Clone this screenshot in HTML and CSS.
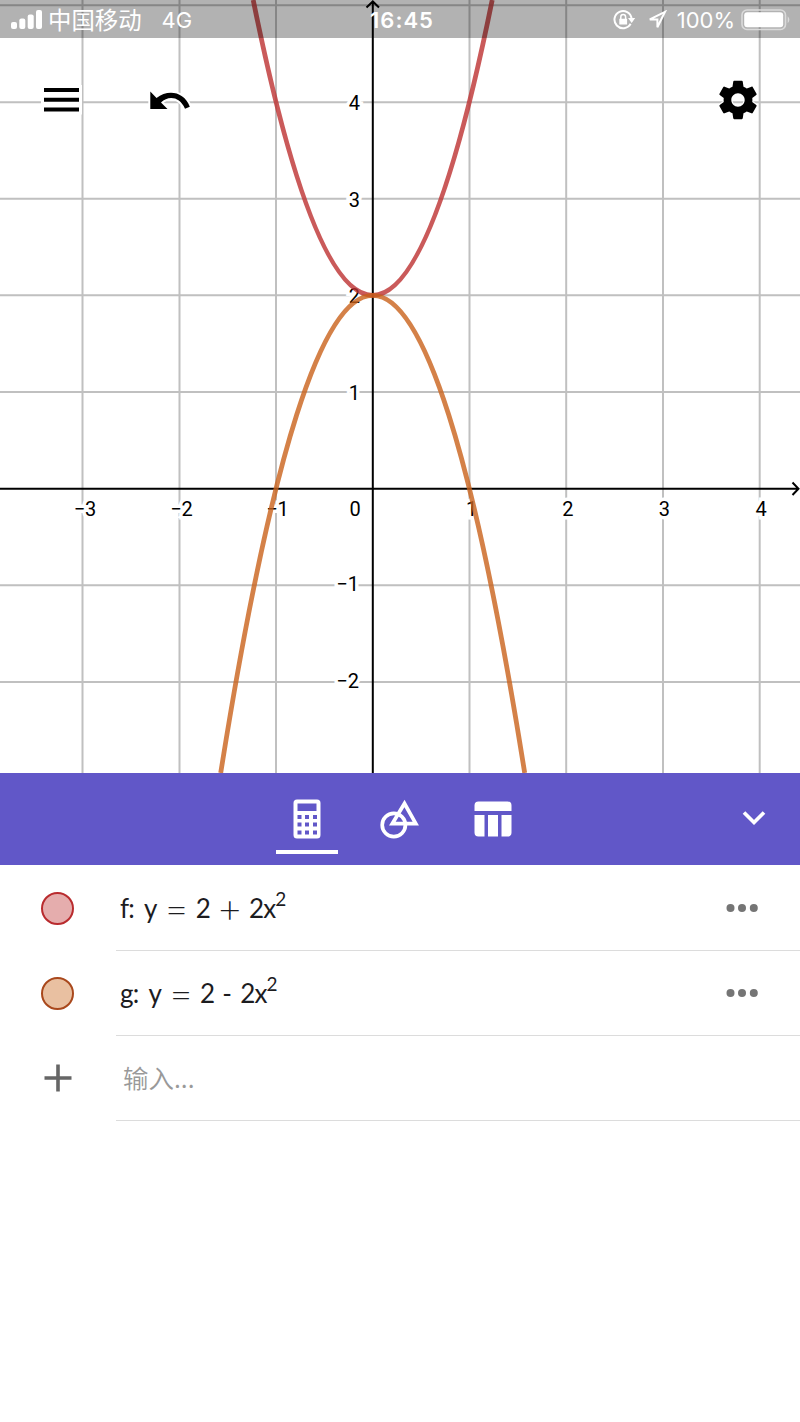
FILE: index.html
```html
<!DOCTYPE html>
<html lang="zh-CN">
<head>
  <meta charset="utf-8"/>
  <meta name="viewport" content="width=device-width, initial-scale=1.0"/>
  <title>Graphing Calculator</title>
  <link rel="stylesheet" href="styles.css">
</head>
<body>
  <div class="app">
    <main class="graph">
      <svg class="plot" width="800" height="773" viewBox="0 0 800 773">
        <path class="grid" d="M82.5 0V773M179.5 0V773M276 0V773M469.5 0V773M566.2 0V773M663 0V773M759.7 0V773M0 5.3H800M0 102.2H800M0 198.7H800M0 295.3H800M0 392H800M0 585.3H800M0 682H800"/>
        <g class="labels">
          <text x="85" y="516">−3</text>
          <text x="181.5" y="516">−2</text>
          <text x="277.5" y="516">−1</text>
          <text x="355" y="516">0</text>
          <text x="471.5" y="516">1</text>
          <text x="567.8" y="516">2</text>
          <text x="664.3" y="516">3</text>
          <text x="761.2" y="516">4</text>
        </g>
        <g class="labels labels-y">
          <text x="360" y="109.5">4</text>
          <text x="360" y="206.5">3</text>
          <text x="360" y="303">2</text>
          <text x="360" y="399.5">1</text>
          <text x="359" y="591">−1</text>
          <text x="359" y="687.7">−2</text>
        </g>
        <path class="axis" d="M0 488.7H798M372.8 2V773M792.5 482.5L798.5 488.7L792.5 495M366.5 7.5L372.8 1.5L379 7.5"/>
        <path class="curve curve-f" d="M253.2 0Q372.7 590.6 492.2 0"/>
        <path class="curve curve-g" d="M220.7 773Q372.7 -182.4 524.7 773"/>
      </svg>

      <header class="status">
        <div class="status-left">
          <svg width="32" height="20" viewBox="0 0 32 20" fill="#fff">
            <rect x="0" y="12" width="6" height="7" rx="2"/>
            <rect x="8.3" y="8.5" width="6" height="10.5" rx="2"/>
            <rect x="16.7" y="4.5" width="6" height="14.5" rx="2"/>
            <rect x="25" y="0" width="6" height="19" rx="2"/>
          </svg>
          <span class="carrier">中国移动</span>
          <span class="network">4G</span>
        </div>
        <time class="clock">16:45</time>
        <div class="status-right">
          <svg class="lock" width="23" height="22" viewBox="0 0 23 22">
            <path class="line" d="M17.6 14.8A8.6 8.6 0 1 1 18.6 9.5"/>
            <path fill="#fff" d="M15 9h7.2l-3.5 5zM6.3 9.8h7.8v5.7H6.3z"/>
            <path class="line thin" d="M7.8 10V8a2.4 2.4 0 0 1 4.8 0v2"/>
          </svg>
          <svg class="location" width="19" height="20" viewBox="0 0 19 20">
            <path class="line" d="M17 1.8L1.8 9.4H9.4V17.2Z"/>
          </svg>
          <span class="percent">100%</span>
          <svg class="battery" width="50" height="22" viewBox="0 0 50 22">
            <rect x="1" y="1" width="43.5" height="19.5" rx="5" fill="none" stroke="#dadada" stroke-width="1.6"/>
            <rect x="3.2" y="3.3" width="39" height="15" rx="3" fill="#fff"/>
            <path d="M46.7 7.2q3.4 3.4 0 7z" fill="#dadada"/>
          </svg>
        </div>
      </header>

      <nav class="tools">
        <svg class="menu" width="36" height="24" viewBox="0 0 36 24">
          <path d="M0 0h35v4H0zM0 9.7h35v4H0zM0 19.4h35v4H0z"/>
        </svg>
        <svg class="undo" width="40" height="20" viewBox="0 0 40 20">
          <path d="M.3 .5V18H17.5L11 11.500C18 4.500 29.500 5 35 17.700L39.800 15.700C34 .5 18-1.800 6.500 7Z"/>
        </svg>
        <svg class="gear" width="46" height="46" viewBox="0 0 24 24">
          <path d="M19.43 12.98c.04-.32.07-.64.07-.98s-.03-.66-.07-.98l2.110-1.650c.19-.15.24-.42.12-.64l-2-3.460c-.12-.22-.39-.3-.61-.22l-2.490 1c-.52-.4-1.080-.73-1.690-.98l-.38-2.650C14.460 2.180 14.250 2 14 2h-4c-.25 0-.46.18-.49.42l-.38 2.650c-.61.25-1.170.59-1.690.98l-2.490-1c-.23-.09-.49 0-.61.22l-2 3.460c-.13.22-.07.49.12.64l2.110 1.650c-.04.32-.07.65-.07.98s.03.66.07.98l-2.110 1.650c-.19.15-.24.42-.12.64l2 3.460c.12.22.39.3.61.22l2.490-1c.52.4 1.080.73 1.690.98l.38 2.650c.03.24.24.42.49.42h4c.25 0 .46-.18.49-.42l.38-2.650c.61-.25 1.170-.59 1.690-.98l2.490 1c.23.09.49 0 .61-.22l2-3.460c.12-.22.07-.49-.12-.64l-2.110-1.650zM12 15.500c-1.930 0-3.500-1.570-3.500-3.500s1.570-3.500 3.500-3.500 3.500 1.570 3.500 3.500-1.570 3.500-3.500 3.500z"/>
        </svg>
      </nav>
    </main>

    <nav class="tabs">
      <div class="tab active">
        <svg width="28" height="40" viewBox="0 0 28 40">
          <path fill="#fff" fill-rule="evenodd" d="M4 .5H24Q27.500 .5 27.500 4V36Q27.500 39.500 24 39.500H4Q.5 39.500 .5 36V4Q.5 .5 4 .5ZM4.500 4.500V12H23.500V4.500ZM4.500 16V20H8.500V16ZM12 16V20H16V16ZM20 16V20H24V16ZM4.500 23.500V27.500H8.500V23.500ZM12 23.500V27.500H16V23.500ZM20 23.500V27.500H24V23.500ZM4.500 31.500V35.500H8.500V31.500ZM12 31.500V35.500H16V31.500ZM20 31.500V35.500H24V31.500Z"/>
        </svg>
      </div>
      <div class="tab">
        <svg width="40" height="40" viewBox="0 0 40 40" fill="none" stroke="#fff" stroke-width="3.700">
          <circle cx="13.800" cy="26" r="11.600"/>
          <path d="M24.500 4.500L12.300 24.700H35.800Z"/>
        </svg>
      </div>
      <div class="tab">
        <svg width="38" height="40" viewBox="0 0 38 40" fill="#fff">
          <path d="M4.500 2.500H33.500Q37.500 2.500 37.500 6.500V12H.5V6.500Q.5 2.500 4.500 2.500ZM.5 16H10.500V37.500H4.500Q.5 37.500 .5 33.500ZM14 16H24V37.500H14ZM27.500 16H37.500V33.500Q37.500 37.500 33.500 37.500H27.500Z"/>
        </svg>
      </div>
      <svg class="collapse" width="24" height="16" viewBox="0 0 24 16">
        <path d="M2 2.500L12 12.500L22 2.500"/>
      </svg>
    </nav>

    <section class="rows">
      <div class="row">
        <div class="marker"><span class="dot dot-f"></span></div>
        <div class="cell">
          <div class="formula">
            <span>f:</span><span>y</span><span class="op">=</span><span>2</span><span class="op">+</span><span>2x<sup>2</sup></span>
          </div>
          <svg class="more" width="32" height="10" viewBox="0 0 32 10"><circle cx="4.500" cy="5" r="4"/><circle cx="16" cy="5" r="4"/><circle cx="27.800" cy="5" r="4"/></svg>
        </div>
      </div>
      <div class="row">
        <div class="marker"><span class="dot dot-g"></span></div>
        <div class="cell">
          <div class="formula">
            <span>g:</span><span>y</span><span class="op">=</span><span>2</span><span class="minus">-</span><span>2x<sup>2</sup></span>
          </div>
          <svg class="more" width="32" height="10" viewBox="0 0 32 10"><circle cx="4.500" cy="5" r="4"/><circle cx="16" cy="5" r="4"/><circle cx="27.800" cy="5" r="4"/></svg>
        </div>
      </div>
      <div class="row">
        <div class="marker">
          <svg width="28" height="28" viewBox="0 0 28 28" stroke="#666" stroke-width="3.600"><path d="M14 .5V27.500M.5 14H27.500"/></svg>
        </div>
        <div class="cell"><span class="placeholder">输入...</span></div>
      </div>
    </section>
  </div>
</body>
</html>
```

FILE: styles.css
```css
* {
  box-sizing: border-box;
}
body {
  margin: 0;
  background: #fff;
  font-family: Roboto, "Noto Sans CJK SC", sans-serif;
}
svg {
  display: block;
  flex-shrink: 0;
}
.app {
  width: 800px;
  height: 1422px;
  overflow: hidden;
}

/* graph */
.graph {
  display: grid;
  grid-template-rows: 38px 1fr;
  height: 773px;
}
.plot {
  grid-area: 1 / 1 / 3 / 2;
}
.grid {
  stroke: #c0c0c0;
  stroke-width: 2;
}
.axis {
  fill: none;
  stroke: #000;
  stroke-width: 2;
}
.labels {
  font-size: 20px;
  text-anchor: middle;
  stroke: #fff;
  stroke-width: 7px;
  paint-order: stroke;
}
.labels-y {
  text-anchor: end;
}
.curve {
  fill: none;
  stroke-width: 4.8;
  stroke-opacity: 0.8;
}
.curve-f {
  stroke: #bd3131;
}
.curve-g {
  stroke: #c9611a;
}

/* status bar */
.status {
  grid-area: 1 / 1 / 2 / 2;
  z-index: 1;
  display: grid;
  grid-template-columns: 370px 1fr auto;
  align-items: center;
  padding-right: 9px;
  background: rgba(0, 0, 0, 0.3);
  color: #fff;
  font-family: Inter, "Noto Sans CJK SC", sans-serif;
  font-size: 22px;
  line-height: 39px;
}
.status-left,
.status-right {
  display: flex;
  align-items: center;
  height: 38px;
}
.status-left {
  padding-left: 11px;
}
.carrier {
  margin-left: 5px;
  font-size: 23.4px;
}
.network {
  margin: 1px 0 0 20px;
}
.clock {
  padding-top: 1px;
  font-weight: 600;
  letter-spacing: 1px;
}
.line {
  fill: none;
  stroke: #fff;
  stroke-width: 2;
}
.thin {
  stroke-width: 1.5;
}
.location {
  margin-left: 12px;
}
.percent {
  margin: 1px 0 0 10px;
}
.battery {
  margin-left: 6px;
}

/* toolbar on the graph */
.tools {
  grid-area: 2 / 1 / 3 / 2;
  z-index: 1;
  display: flex;
  align-items: flex-start;
  padding: 39px 39px 0 44px;
}
.menu,
.undo,
.gear {
  overflow: visible;
  stroke: #fff;
  paint-order: stroke;
}
.menu {
  margin-top: 11px;
  stroke-width: 6px;
}
.undo {
  margin: 14px 0 0 70px;
  stroke-width: 4px;
}
.gear {
  margin-left: auto;
  stroke-width: 1.2px;
}

/* tabs */
.tabs {
  display: grid;
  grid-template-columns: 62px 62px 62px 1fr;
  column-gap: 31px;
  height: 92px;
  padding: 26px 34px 0 276px;
  background: #6157c8;
}
.tab {
  display: flex;
  justify-content: center;
  height: 55px;
}
.active {
  border-bottom: 4px solid #fff;
}
.collapse {
  justify-self: end;
  margin-top: 11px;
  fill: none;
  stroke: #fff;
  stroke-width: 3.7;
}

/* algebra list */
.rows {
  padding-top: 1px;
}
.row {
  display: grid;
  grid-template-columns: 116px 1fr;
  height: 85px;
}
.marker {
  display: flex;
  align-items: center;
  justify-content: center;
  padding: 0 1px 1px 0;
}
.dot {
  width: 33px;
  height: 33px;
  border: 2px solid;
  border-radius: 50%;
}
.dot-f {
  border-color: #b92b2e;
  background: #e5adad;
}
.dot-g {
  border-color: #a9481c;
  background: #e9c0a1;
}
.cell {
  display: flex;
  align-items: center;
  justify-content: space-between;
  padding: 0 42px 0 4px;
  border-bottom: 1px solid #dcdcdc;
}
.formula {
  display: flex;
  gap: 10px;
  color: #1c1c1f;
  font-family: Lato, sans-serif;
  font-size: 26px;
  letter-spacing: -0.8px;
  line-height: 34px;
}
.formula sup {
  font-size: 19px;
  line-height: 0;
  vertical-align: 12px;
}
.op {
  display: flex;
  justify-content: center;
  width: 19px;
  font-size: 38px;
  font-weight: 300;
}
.minus {
  margin: 0 -1px 0 -2px;
}
.more {
  fill: #757575;
}
.placeholder {
  padding: 0 0 3px 3px;
  color: #999;
  font-family: "Noto Sans CJK SC", sans-serif;
  font-size: 25.5px;
  font-weight: 350;
}
```
